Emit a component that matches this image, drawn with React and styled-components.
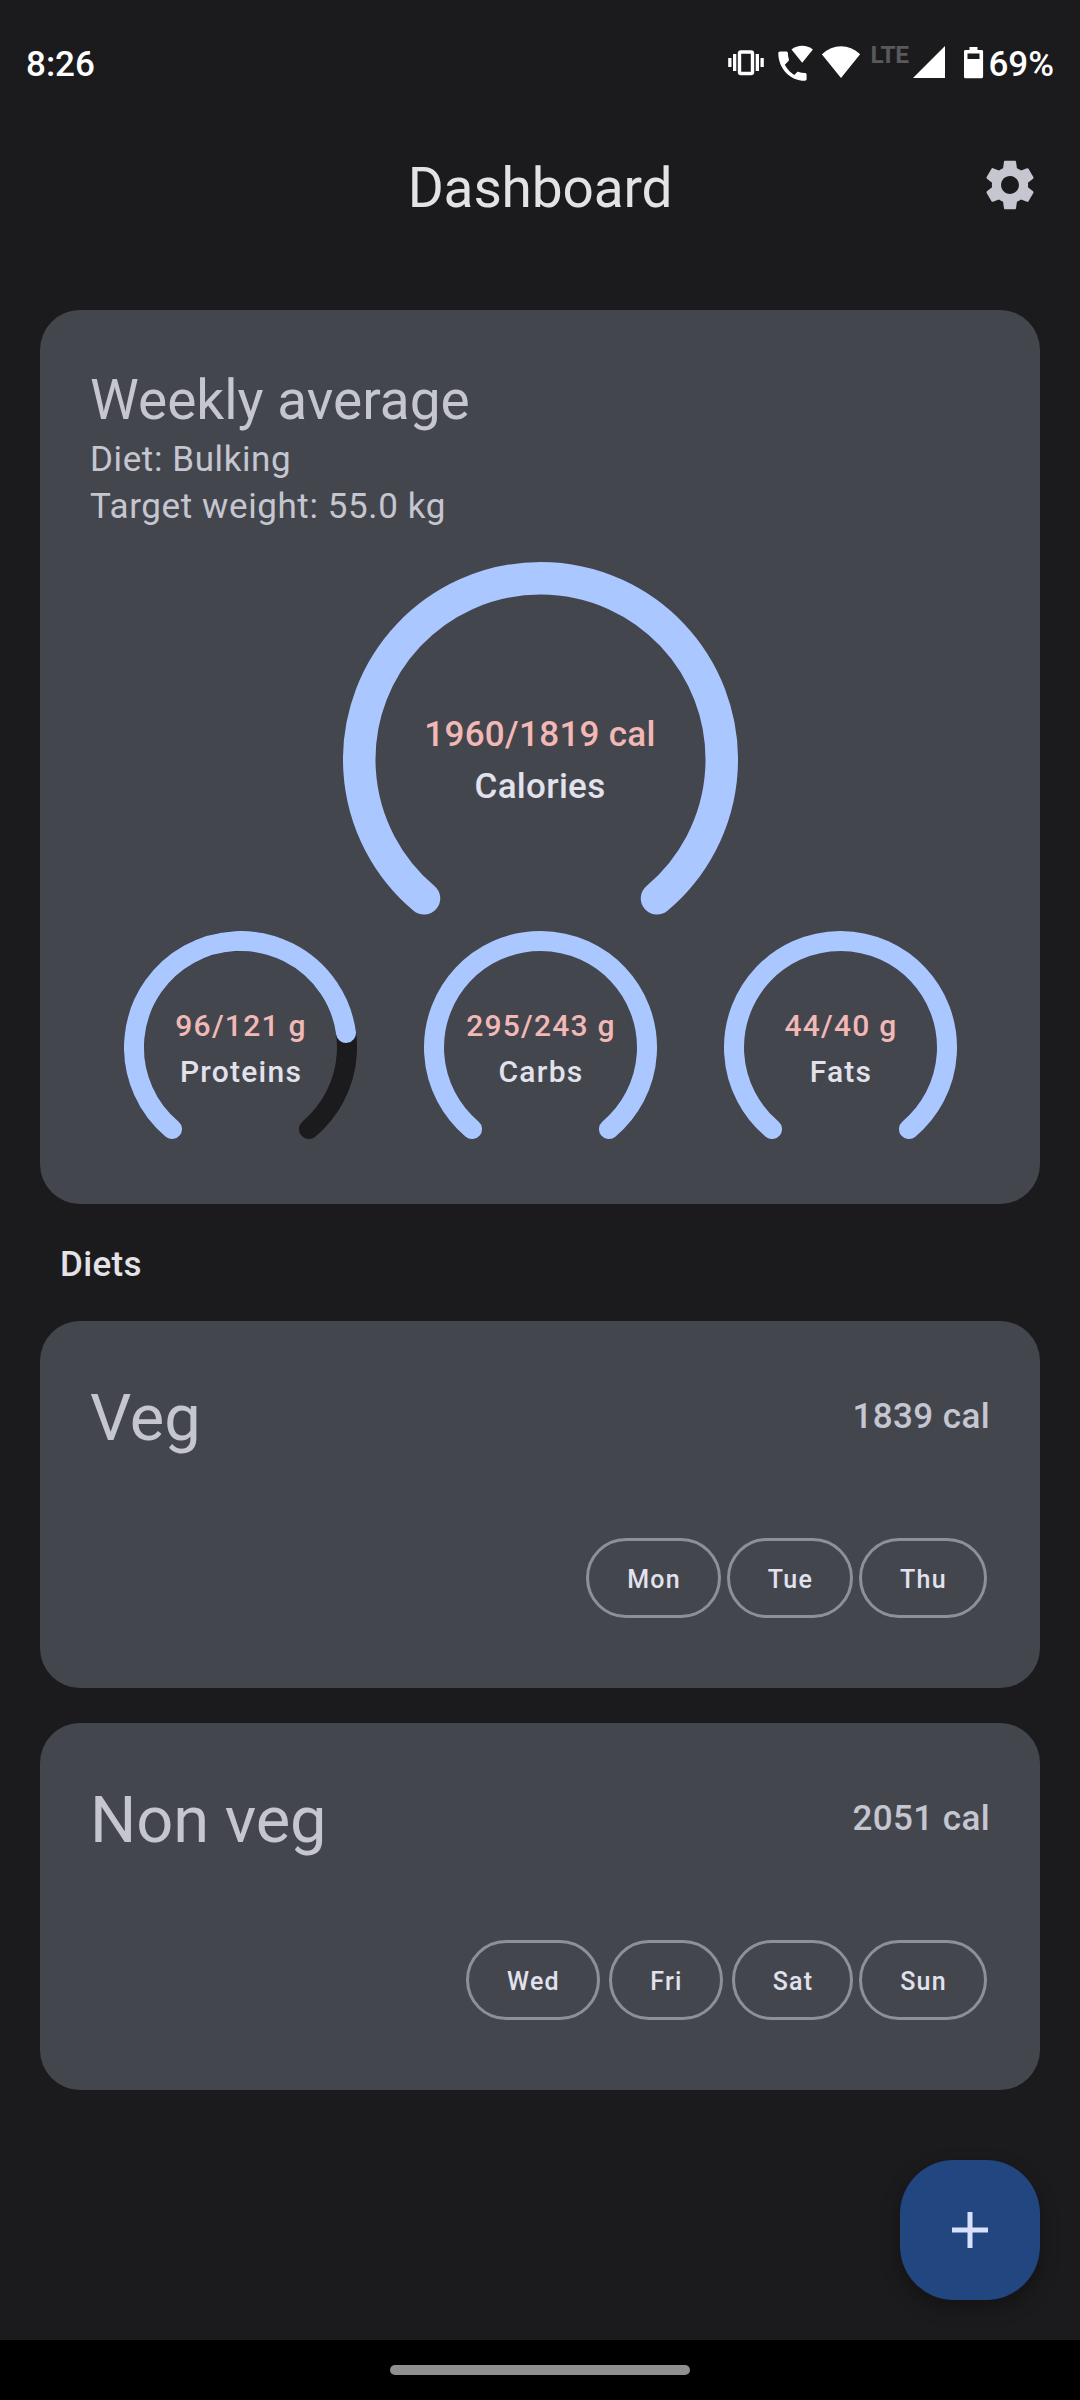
import React from "react";
import styled, { createGlobalStyle } from "styled-components";

const GlobalStyle = createGlobalStyle`
  *, *::before, *::after { box-sizing: border-box; }
  body { margin: 0; background: #1b1b1d; font-family: Roboto, "Noto Sans", sans-serif; }
  svg { display: block; }
`;

const Screen = styled.div`
  width: 1080px;
  height: 2400px;
  display: flex;
  flex-direction: column;
  background: #1b1b1d;
  overflow: hidden;
`;

const StatusBar = styled.header`
  height: 124px;
  padding: 0 26px;
  display: flex;
  align-items: center;
  justify-content: space-between;
  color: #fff;
`;

const StatusText = styled.span`
  font-size: 35px;
  font-weight: 500;
  line-height: 40px;
  padding-top: 5px;
`;

const StatusIcons = styled.div`
  display: flex;
  align-items: center;
`;

const NetworkType = styled.span`
  width: 43px;
  margin-left: 9px;
  padding-bottom: 15px;
  font-size: 24.5px;
  line-height: 24px;
  font-weight: 700;
  letter-spacing: -0.5px;
  color: #59595a;
`;

const AppBar = styled.div`
  height: 128px;
  padding: 0 40px;
  display: grid;
  grid-template-columns: 60px 1fr 60px;
  align-items: center;
`;

const PageTitle = styled.h1`
  grid-column: 2;
  margin: 0;
  text-align: center;
  font-size: 55px;
  font-weight: 400;
  line-height: 70px;
  letter-spacing: -0.15px;
  color: #e3e2e6;
`;

const SettingsButton = styled.button`
  border: 0;
  padding: 0;
  background: none;
  color: #c5c6d0;
  margin: 0 0 6px;
  display: grid;
  place-items: center;
`;

const Content = styled.main`
  flex: 1;
  padding: 58px 40px 0;
  display: flex;
  flex-direction: column;
`;

const Card = styled.section`
  height: ${(p) => p.$height}px;
  padding: 55px 50px 0;
  border-radius: 40px;
  background: #44464e;
  color: #c5c6d0;
`;

const SummaryTitle = styled.h2`
  margin: 0 0 1px;
  font-size: 55px;
  font-weight: 400;
  line-height: 70px;
`;

const SummaryLine = styled.p`
  margin: 0;
  font-size: 35px;
  line-height: 47px;
  letter-spacing: 0.6px;
`;

const MainGauge = styled.div`
  margin-top: 32px;
  display: flex;
  justify-content: center;
`;

const GaugeRow = styled.div`
  display: grid;
  grid-template-columns: repeat(3, 300px);
  justify-items: center;
`;

const GaugeBox = styled.div`
  display: grid;
  width: ${(p) => p.$width}px;
  height: ${(p) => p.$height}px;
  & > * { grid-area: 1 / 1; }
`;

const GaugeText = styled.div`
  padding-top: ${(p) => (p.$large ? 147 : 72)}px;
  padding-left: ${(p) => (p.$large ? 0 : 2)}px;
  text-align: center;
  font-weight: 500;
  font-size: ${(p) => (p.$large ? 35 : 30)}px;
  line-height: ${(p) => (p.$large ? 52 : 46)}px;
  letter-spacing: ${(p) => (p.$large ? 0.3 : 1.25)}px;
  color: #e1e2ec;
`;

const GaugeValue = styled.div`
  color: #f2b8b5;
`;

const SectionTitle = styled.h3`
  margin: 0;
  height: 117px;
  padding: 39px 20px 0;
  font-size: 35px;
  font-weight: 500;
  line-height: 44px;
  letter-spacing: 0.35px;
  color: #e3e2e6;
`;

const DietList = styled.div`
  display: grid;
  gap: 35px;
`;

const DietHead = styled.div`
  height: 84px;
  display: flex;
  align-items: center;
  justify-content: space-between;
`;

const DietName = styled.h2`
  margin: 0;
  font-size: 65px;
  font-weight: 400;
  line-height: 80px;
  letter-spacing: -0.15px;
`;

const DietCalories = styled.span`
  font-size: 35px;
  font-weight: 500;
  line-height: 50px;
  padding-bottom: 2px;
  letter-spacing: 0.4px;
`;

const Days = styled.div`
  margin: 78px 3px 0 0;
  display: flex;
  justify-content: flex-end;
`;

const Day = styled.span`
  width: ${(p) => p.$width}px;
  height: 80px;
  margin-left: ${(p) => p.$gap}px;
  padding: 2px 0 0 1px;
  border: 3px solid #8e9099;
  border-radius: 40px;
  display: flex;
  align-items: center;
  justify-content: center;
  font-size: 25px;
  font-weight: 500;
  letter-spacing: 1.25px;
  color: #e1e2ec;
`;

const Footer = styled.div`
  height: 240px;
  padding: 60px 40px 0;
  display: flex;
  justify-content: flex-end;
  overflow: hidden;
`;

const AddButton = styled.button`
  width: 140px;
  height: 140px;
  padding: 0;
  border: 0;
  border-radius: 54px;
  display: grid;
  place-items: center;
  background: #22467f;
  color: #d8e2ff;
  box-shadow: 0 8px 20px rgba(0, 0, 0, 0.3);
`;

const NavBar = styled.footer`
  height: 60px;
  display: grid;
  place-items: center;
  background: #000;
`;

const NavHandle = styled.div`
  width: 300px;
  height: 10px;
  border-radius: 5px;
  background: #8f8f8f;
`;

const point = (c, r, deg) => {
  const a = (deg * Math.PI) / 180;
  return `${(c + r * Math.cos(a)).toFixed(2)} ${(c + r * Math.sin(a)).toFixed(2)}`;
};

const arc = (c, r, start, sweep) =>
  `M${point(c, r, start)}A${r} ${r} 0 ${sweep > 180 ? 1 : 0} 1 ${point(c, r, start + sweep)}`;

function Gauge({ large, value, target, unit, label }) {
  const size = large ? 395 : 233;
  const height = large ? 369 : 210;
  const stroke = large ? 32.5 : 20;
  const c = size / 2;
  const r = c - stroke / 2;
  const ratio = Math.min(value / target, 1);
  return (
    <GaugeBox $width={size} $height={height}>
      <svg width={size} height={height} fill="none" strokeWidth={stroke} strokeLinecap="round">
        {ratio < 1 && <path d={arc(c, r, 130, 280)} stroke="#1b1b1d" />}
        <path d={arc(c, r, 130, 280 * ratio)} stroke="#aac7ff" />
      </svg>
      <GaugeText $large={large}>
        <GaugeValue>{`${value}/${target} ${unit}`}</GaugeValue>
        <div>{label}</div>
      </GaugeText>
    </GaugeBox>
  );
}

const diets = [
  { name: "Veg", cal: 1839, days: [["Mon", 135, 0], ["Tue", 126, 6], ["Thu", 128, 6]] },
  { name: "Non veg", cal: 2051, days: [["Wed", 134, 0], ["Fri", 114, 9], ["Sat", 121, 9], ["Sun", 128, 6]] },
];

export default function App() {
  return (
    <Screen>
      <GlobalStyle />
      <StatusBar>
        <StatusText>8:26</StatusText>
        <StatusIcons>
          <svg width="50" height="40" viewBox="728 42 50 40" fill="currentColor">
            <rect x="739.5" y="52" width="13" height="21.500" rx="1.5" fill="none" stroke="currentColor" strokeWidth="3.4" />
            <rect x="733" y="54" width="3.3" height="17" />
            <rect x="728.2" y="58" width="3.3" height="9" />
            <rect x="755.700" y="54" width="3.3" height="17" />
            <rect x="760.500" y="58" width="3.3" height="9" />
          </svg>
          <svg width="44" height="40" viewBox="778 42 44 40" fill="currentColor">
            <path d="M780 51.5h6.200c1 0 1.700.7 1.700 1.700 0 2.100.3 4.200 1 6.100.2.600 0 1.300-.4 1.800l-3.700 3.700c2.600 5 6.700 9 11.600 11.500l-3.300-.1 3.900-3.900c.5-.5 1.100-.6 1.700-.4 2 .6 4 1 6.200 1 1 0 1.700.7 1.700 1.700v4.500c0 1-.7 1.700-1.700 1.700-15 0-26.600-12.600-26.600-27.600 0-1 .7-1.700 1.700-1.700z" />
            <path d="M802.200 62.800l-10.700-13.300c6-5 15.400-5 21.400 0z" />
          </svg>
          <svg width="39" height="40" viewBox="822 42 39 40" fill="currentColor">
            <path d="M841 78L821.900 54.300c11-10.800 27.200-10.800 38.200 0z" />
          </svg>
          <NetworkType>LTE</NetworkType>
          <svg width="51" height="40" viewBox="913 42 51 40" fill="currentColor">
            <path d="M913 78L945 46V78z" />
          </svg>
          <svg width="24" height="40" viewBox="964 42 24 40" fill="currentColor">
            <path fillRule="evenodd" d="M969.500 47h8v3h4c1 0 1.600.6 1.600 1.600v25c0 1-.6 1.600-1.600 1.600h-16c-1 0-1.600-.6-1.600-1.600v-25c0-1 .6-1.600 1.600-1.600h4zM967.500 53.500v5.500h12v-5.500z" />
          </svg>
          <StatusText>69%</StatusText>
        </StatusIcons>
      </StatusBar>
      <AppBar>
        <PageTitle>Dashboard</PageTitle>
        <SettingsButton aria-label="Settings">
          <svg width="58" height="58" viewBox="0 0 24 24" fill="currentColor">
            <path d="M19.43 12.98c.04-.32.07-.64.07-.98s-.03-.66-.07-.98l2.110-1.650c.19-.15.24-.42.12-.64l-2-3.460c-.12-.22-.39-.3-.61-.22l-2.490 1c-.52-.4-1.080-.73-1.690-.98l-.38-2.650C14.460 2.180 14.250 2 14 2h-4c-.25 0-.46.18-.49.42l-.38 2.650c-.61.25-1.170.59-1.690.98l-2.490-1c-.23-.09-.49 0-.61.22l-2 3.460c-.13.22-.07.49.12.64l2.110 1.650c-.04.32-.07.65-.07.98s.03.66.07.98l-2.110 1.650c-.19.15-.24.42-.12.64l2 3.460c.12.22.39.3.61.22l2.490-1c.52.4 1.080.73 1.690.98l.38 2.650c.03.24.24.42.49.42h4c.25 0 .46-.18.49-.42l.38-2.650c.61-.25 1.170-.59 1.690-.98l2.490 1c.23.09.49 0 .61-.22l2-3.460c.12-.22.07-.49-.12-.64l-2.110-1.650zM12 15.700c-2.040 0-3.700-1.660-3.700-3.700s1.660-3.700 3.700-3.700 3.700 1.660 3.700 3.700-1.660 3.700-3.700 3.700z" />
          </svg>
        </SettingsButton>
      </AppBar>
      <Content>
        <Card $height={894}>
          <SummaryTitle>Weekly average</SummaryTitle>
          <SummaryLine>Diet: Bulking</SummaryLine>
          <SummaryLine>Target weight: 55.0 kg</SummaryLine>
          <MainGauge>
            <Gauge large value={1960} target={1819} unit="cal" label="Calories" />
          </MainGauge>
          <GaugeRow>
            <Gauge value={96} target={121} unit="g" label="Proteins" />
            <Gauge value={295} target={243} unit="g" label="Carbs" />
            <Gauge value={44} target={40} unit="g" label="Fats" />
          </GaugeRow>
        </Card>
        <SectionTitle>Diets</SectionTitle>
        <DietList>
          {diets.map((diet) => (
            <Card key={diet.name} $height={367}>
              <DietHead>
                <DietName>{diet.name}</DietName>
                <DietCalories>{diet.cal} cal</DietCalories>
              </DietHead>
              <Days>
                {diet.days.map(([day, width, gap]) => (
                  <Day key={day} $width={width} $gap={gap}>{day}</Day>
                ))}
              </Days>
            </Card>
          ))}
        </DietList>
      </Content>
      <Footer>
        <AddButton aria-label="Add diet">
          <svg width="60" height="60" viewBox="0 0 24 24" fill="currentColor">
            <path d="M19.200 13H13v6.200h-2V13H4.800v-2H11V4.800h2V11h6.200z" />
          </svg>
        </AddButton>
      </Footer>
      <NavBar>
        <NavHandle />
      </NavBar>
    </Screen>
  );
}
